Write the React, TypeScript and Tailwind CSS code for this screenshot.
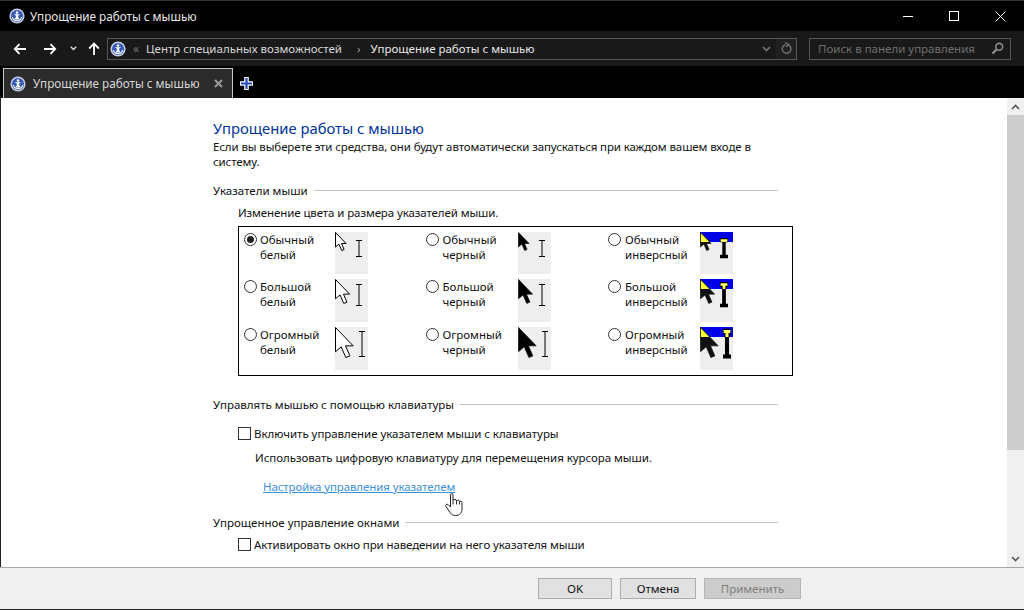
const font = { ui: "font-['Noto_Sans','Liberation_Sans',sans-serif]" };

function PanelIcon({ size = 16 }: { size?: number }) {
  return (
    <svg width={size} height={size} viewBox="0 0 16 16" className="shrink-0">
      <circle cx="8" cy="8" r="7.6" fill="#c4cce2" />
      <circle cx="8" cy="8" r="6" fill="#3557b4" />
      <circle cx="8" cy="4.6" r="1.3" fill="#fff" />
      <path d="M4.6 6.2H11.4L9.2 7.6V9.4L11 11.4H5L6.8 9.4V7.6Z" fill="#fff" />
      <path d="M3.4 9A4.7 4.7 0 0 0 12.6 9" stroke="#fff" strokeWidth="1.1" fill="none" />
    </svg>
  );
}

const arrowPts = (s: number) =>
  [
    [0, 0],
    [0, 14.5],
    [3.4, 11.6],
    [6.2, 18],
    [8.6, 17],
    [6, 11],
    [10.6, 11],
  ]
    .map(([x, y]) => `${x * s + 0.5},${y * s + 0.5}`)
    .join(" ");

function Beam({ x, y1, y2, sw, half, color }: { x: number; y1: number; y2: number; sw: number; half: number; color: string }) {
  return (
    <path
      d={`M${x - half} ${y1}H${x + half}M${x - half} ${y2}H${x + half}M${x} ${y1}V${y2}`}
      stroke={color}
      strokeWidth={sw}
      fill="none"
    />
  );
}

type PreviewProps = {
  kind: "white" | "black" | "inverse";
  scale: number;
  x: number;
  y1: number;
  y2: number;
  h: number;
};

function CursorPreview({ kind, scale, x, y1, y2, h }: PreviewProps) {
  const pts = arrowPts(scale);
  const thick = 2.4 + scale;
  return (
    <svg width={33} height={h} viewBox={`0 0 33 ${h}`} className="shrink-0 bg-[#eeeeee]">
      {kind === "inverse" && <rect width="33" height="10" fill="#0000e6" />}
      {kind === "white" && <polygon points={pts} fill="#fff" stroke="#000" strokeWidth="1" />}
      {kind === "black" && <polygon points={pts} fill="#000" stroke="#000" strokeWidth="0.6" />}
      {kind === "inverse" && <polygon points={pts} fill="#111" stroke="#000" strokeWidth="0.6" />}
      {kind === "inverse" && (
        <svg x="0" y="0" width="33" height="10">
          <polygon points={pts} fill="#ffff33" stroke="#000" strokeWidth="0.6" />
        </svg>
      )}
      {kind === "inverse" ? (
        <>
          <Beam x={x} y1={y1} y2={y2} sw={thick} half={4} color="#000" />
          <svg x="0" y="0" width="33" height="10">
            <Beam x={x} y1={y1} y2={y2} sw={thick + 1.4} half={4} color="#000" />
            <Beam x={x} y1={y1} y2={y2} sw={thick - 1} half={3.4} color="#ffff66" />
          </svg>
        </>
      ) : (
        <Beam x={x} y1={y1} y2={y2} sw={1} half={3} color="#000" />
      )}
    </svg>
  );
}

const rows = [
  { name: "Обычный", scale: 1, h: 42, x: 24, y1: 8.5, y2: 24.5 },
  { name: "Большой", scale: 1.33, h: 43, x: 24, y1: 5.5, y2: 26.5 },
  { name: "Огромный", scale: 1.67, h: 43, x: 27, y1: 4.5, y2: 29.5 },
];

const columns: { label: string; kind: "white" | "black" | "inverse"; radio: string; text: string }[] = [
  { label: "белый", kind: "white", radio: "ml-0", text: "ml-[3px] w-[75px]" },
  { label: "черный", kind: "black", radio: "-ml-[1px]", text: "ml-[4px] w-[75px]" },
  { label: "инверсный", kind: "inverse", radio: "-ml-[1px]", text: "ml-[4px] w-[75px]" },
];

function Radio({ on, className }: { on?: boolean; className: string }) {
  return (
    <span className={`${className} mt-[1px] flex h-[13px] w-[13px] shrink-0 items-center justify-center rounded-full border border-[#333]`}>
      {on && <span className="h-[7px] w-[7px] rounded-full bg-[#222]" />}
    </span>
  );
}

function Heading({ children }: { children: string }) {
  return (
    <div className="flex items-center gap-[6px] text-[#111]">
      <span className="whitespace-nowrap">{children}</span>
      <span className="h-px flex-1 bg-[#c4c4c4]" />
    </div>
  );
}

function Checkbox() {
  return <span className="h-[13px] w-[13px] shrink-0 border border-[#333] bg-white" />;
}

export default function App() {
  return (
    <div className={`${font.ui} flex h-[610px] w-[1024px] flex-col overflow-hidden bg-black text-[11.5px] leading-[15px]`}>
      {/* title bar */}
      <div className="flex h-[31px] shrink-0 items-center border-t border-[#333] text-[#e8e8e8]">
        <div className="ml-[9px] flex items-center gap-[5px]">
          <PanelIcon />
          <span className="text-[11.7px]">Упрощение работы с мышью</span>
        </div>
        <div className="ml-auto flex items-center">
          <span className="mr-[36px] h-px w-[10px] bg-white" />
          <span className="mr-[36px] h-[10px] w-[10px] border border-white" />
          <svg width="11" height="11" viewBox="0 0 11 11" className="mr-[18px]">
            <path d="M0.5 0.5L10.5 10.5M10.5 0.5L0.5 10.5" stroke="#fff" strokeWidth="1" />
          </svg>
        </div>
      </div>

      {/* toolbar */}
      <div className="flex h-[35px] shrink-0 items-center bg-[#191919]">
        <svg width="14" height="12" viewBox="0 0 14 12" className="ml-[13px]">
          <path d="M13 6H2M6.5 1.2L1.8 6L6.5 10.8" stroke="#fff" strokeWidth="1.8" fill="none" />
        </svg>
        <svg width="14" height="12" viewBox="0 0 14 12" className="ml-[16px]">
          <path d="M1 6H12M7.5 1.2L12.2 6L7.5 10.8" stroke="#fff" strokeWidth="1.8" fill="none" />
        </svg>
        <svg width="7" height="5" viewBox="0 0 7 5" className="ml-[13px]">
          <path d="M0.8 0.8L3.5 3.6L6.2 0.8" stroke="#ddd" strokeWidth="1.4" fill="none" />
        </svg>
        <svg width="12" height="13" viewBox="0 0 12 13" className="ml-[11px]">
          <path d="M6 13V2M1.2 6.5L6 1.6L10.8 6.5" stroke="#fff" strokeWidth="1.8" fill="none" />
        </svg>
        <div className="ml-[7px] flex h-[22px] w-[690px] items-center border border-[#555] pl-[2px]">
          <PanelIcon />
          <span className="ml-[7px] text-[12px] text-[#777]">«</span>
          <span className="ml-[7px] text-[#d8d8d8]">Центр специальных возможностей</span>
          <span className="ml-[15px] text-[#999]">›</span>
          <span className="ml-[10px] text-[#e8e8e8]">Упрощение работы с мышью</span>
          <div className="ml-auto flex h-full items-center">
            <svg width="9" height="6" viewBox="0 0 9 6" className="mr-[5px]">
              <path d="M1 1L4.5 4.6L8 1" stroke="#777" strokeWidth="1.6" fill="none" />
            </svg>
            <div className="flex h-full w-[20px] items-center justify-center bg-[#202020]">
              <svg width="11" height="13" viewBox="0 0 11 13">
                <path d="M4.5 2.8A4.3 4.3 0 1 0 8 3.4M4 0.6L7.6 2.4L5.2 5" stroke="#6f6f6f" strokeWidth="1.5" fill="none" />
              </svg>
            </div>
          </div>
        </div>
        <div className="ml-[12px] flex h-[22px] w-[202px] items-center justify-between border border-[#555] pl-[8px] pr-[6px] text-[#6f6f6f]">
          <span>Поиск в панели управления</span>
          <svg width="13" height="13" viewBox="0 0 13 13">
            <circle cx="8.2" cy="4.8" r="3.4" stroke="#8a8a8a" strokeWidth="1.6" fill="none" />
            <path d="M5.6 7.4L1.4 11.6" stroke="#8a8a8a" strokeWidth="2.2" />
          </svg>
        </div>
      </div>

      {/* tabs */}
      <div className="flex h-[32px] shrink-0 items-end">
        <div className="ml-[3px] flex h-[30px] w-[230px] items-center border border-b-0 border-[#c8c8c8] bg-[#2b2b2b] pl-[6px] text-[#d8d8d8]">
          <PanelIcon />
          <span className="ml-[7px] text-[11.7px]">Упрощение работы с мышью</span>
          <svg width="9" height="9" viewBox="0 0 9 9" className="ml-auto mr-[9px]">
            <path d="M1 1L8 8M8 1L1 8" stroke="#9a9a9a" strokeWidth="2" />
          </svg>
        </div>
        <svg width="13" height="13" viewBox="0 0 13 13" className="mb-[8px] ml-[7px]">
          <path d="M6.5 0V13M0 6.5H13" stroke="#fff" strokeWidth="4.6" />
          <path d="M6.5 1V12M1 6.5H12" stroke="#2449b8" strokeWidth="2.2" />
        </svg>
      </div>

      {/* content */}
      <div className="relative flex min-h-0 flex-1 border-l border-[#222] bg-white text-[#111]">
        <div className="min-w-0 flex-1 overflow-hidden pl-[212px] pr-[229px] pt-[20px]">
          <h1 className="text-[14.8px] leading-[20px] font-normal text-[#003399]">Упрощение работы с мышью</h1>
          <p className="mt-[1px] tracking-[-0.1px]">
            Если вы выберете эти средства, они будут автоматически запускаться при каждом вашем входе в систему.
          </p>

          <div className="mt-[14px]">
            <Heading>Указатели мыши</Heading>
          </div>
          <p className="ml-[25px] mt-[7px] tracking-[-0.1px]">Изменение цвета и размера указателей мыши.</p>

          <div className="ml-[25px] mt-[6px] grid h-[150px] w-[555px] grid-cols-[182.5px_182.5px_1fr] grid-rows-[47px_48px_43px] border border-black pl-[5px] pt-[5px]">
            {rows.map((row, i) =>
              columns.map((col) => (
                <div key={row.name + col.kind} className="flex">
                  <Radio on={i === 0 && col.kind === "white"} className={col.radio} />
                  <span className={`${col.text} shrink-0`}>
                    {row.name}
                    <br />
                    {col.label}
                  </span>
                  <CursorPreview kind={col.kind} scale={row.scale} x={row.x} y1={row.y1} y2={row.y2} h={row.h} />
                </div>
              )),
            )}
          </div>

          <div className="mt-[21px]">
            <Heading>Управлять мышью с помощью клавиатуры</Heading>
          </div>
          <div className="ml-[25px] mt-[14px] flex items-center gap-[3px]">
            <Checkbox />
            <span className="tracking-[-0.04px]">Включить управление указателем мыши с клавиатуры</span>
          </div>
          <p className="ml-[42px] mt-[9px] tracking-[-0.04px]">Использовать цифровую клавиатуру для перемещения курсора мыши.</p>
          <a className="ml-[50px] mt-[14px] block tracking-[-0.1px] text-[#3d8fd8] underline">Настройка управления указателем</a>

          <div className="mt-[21px]">
            <Heading>Упрощенное управление окнами</Heading>
          </div>
          <div className="ml-[25px] mt-[7px] flex items-center gap-[3px]">
            <Checkbox />
            <span className="tracking-[-0.1px]">Активировать окно при наведении на него указателя мыши</span>
          </div>
        </div>

        {/* scrollbar */}
        <div className="flex w-[17px] shrink-0 flex-col bg-[#f0f0f0]">
          <div className="flex h-[17px] items-center justify-center">
            <svg width="9" height="6" viewBox="0 0 9 6">
              <path d="M1 5L4.5 1.4L8 5" stroke="#555" strokeWidth="1.6" fill="none" />
            </svg>
          </div>
          <div className="h-[335px] bg-[#cdcdcd]" />
          <div className="mt-auto flex h-[17px] items-center justify-center">
            <svg width="9" height="6" viewBox="0 0 9 6">
              <path d="M1 1L4.5 4.6L8 1" stroke="#555" strokeWidth="1.6" fill="none" />
            </svg>
          </div>
        </div>

        {/* mouse pointer over the link */}
        <svg width="18" height="23" viewBox="0 0 18 23" className="absolute left-[444px] top-[395px]">
          <path
            d="M5.5 14L3 11.5C1.8 10.5 0 12 1 13.5L5 19.5C6.5 21.5 8 22.5 10.5 22.5C14.5 22.5 17 20 17 16V9.5C17 8 15 7.6 14.5 8.8C14.5 7 12 6.6 11.5 8C11.5 6.2 8.5 5.8 8 7.2V1.8C8 0 5.5 0 5.5 1.8Z"
            fill="#fff"
            stroke="#222"
            strokeWidth="1"
          />
          <path d="M8 7V11.5M11.5 8V11.5M14.5 9V11.5" stroke="#222" strokeWidth="1" />
        </svg>
      </div>

      {/* bottom buttons */}
      <div className="flex h-[43px] shrink-0 items-center border-b border-t border-b-[#222] border-t-[#a8a8a8] bg-[#f0f0f0] pl-[538px]">
        <button className="h-[21px] w-[74px] border border-[#adadad] bg-[#e1e1e1] text-[#111]">OK</button>
        <button className="ml-[8px] h-[21px] w-[76px] border border-[#adadad] bg-[#e1e1e1] text-[#111]">Отмена</button>
        <button className="ml-[8px] h-[21px] w-[97px] border border-[#b5b5b5] bg-[#cccccc] text-[#808080]">Применить</button>
      </div>
    </div>
  );
}
